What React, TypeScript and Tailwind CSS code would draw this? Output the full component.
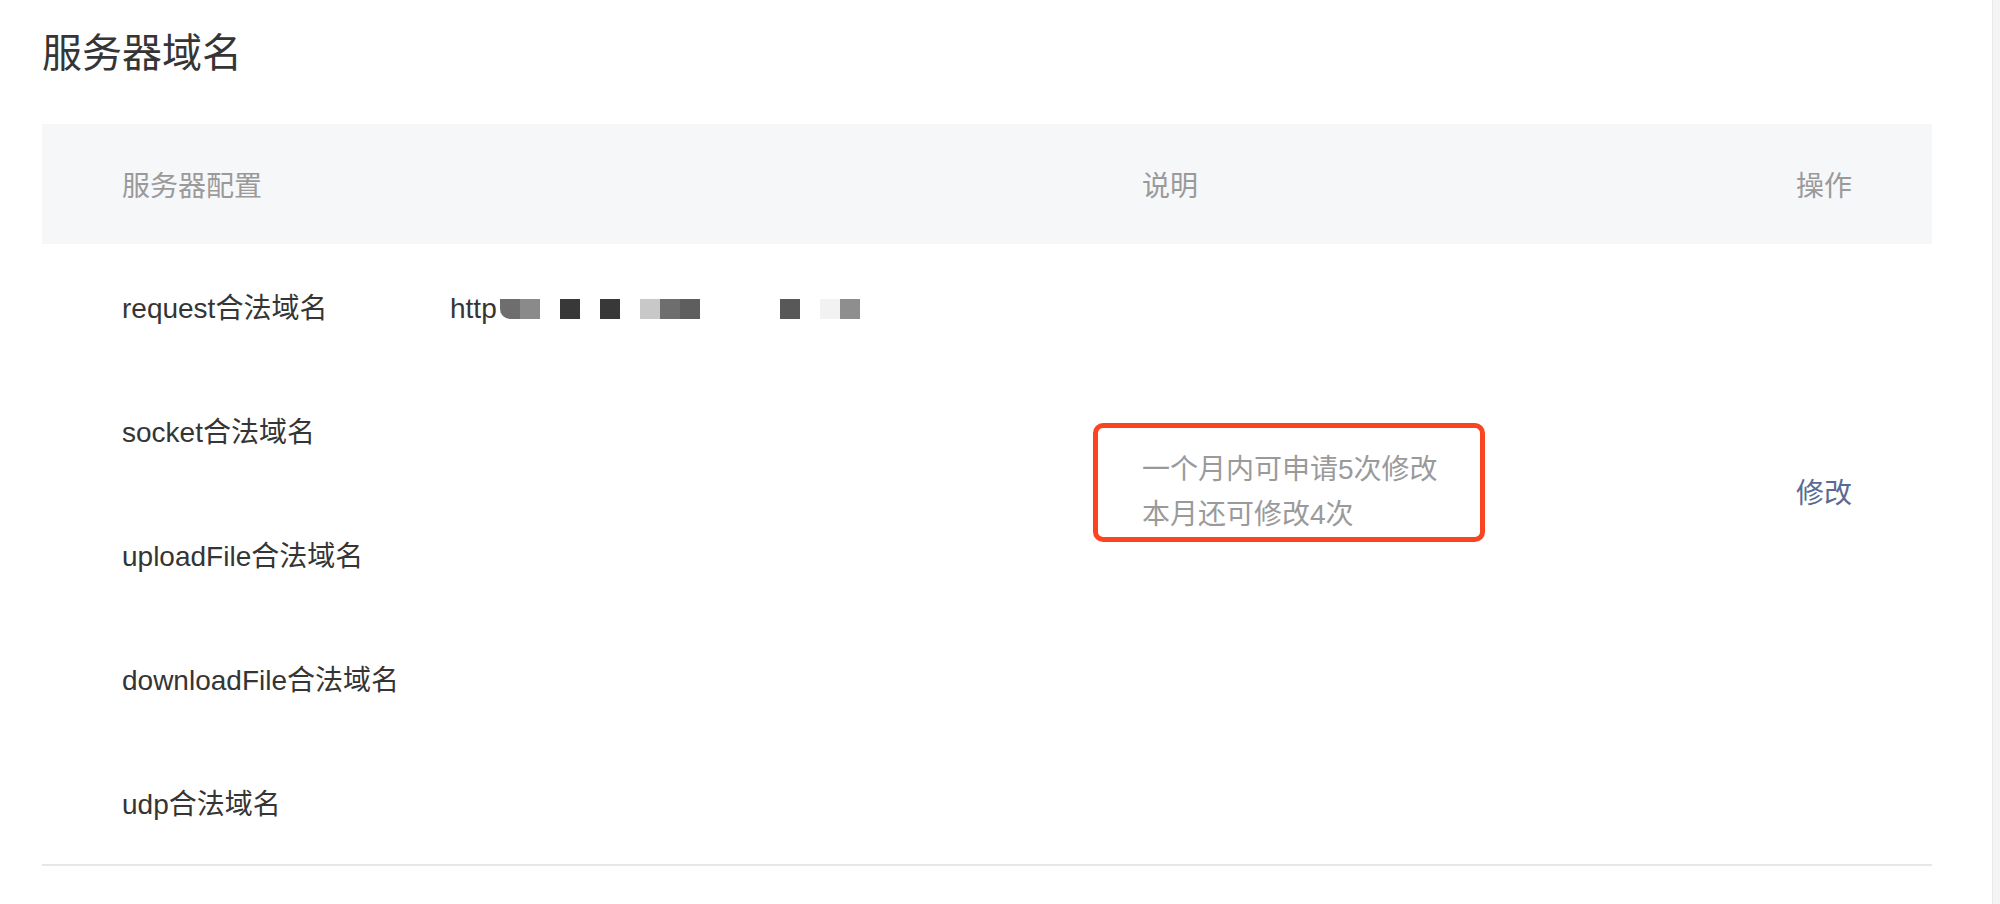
const domains = ["request合法域名", "socket合法域名", "uploadFile合法域名", "downloadFile合法域名", "udp合法域名"];

// pixelated blur over the configured url
const mosaic = [
  "#6e6e6e", "#8a8a8a", "", "#383838", "", "#383838", "", "#c8c8c8", "#6e6e6e",
  "#5e5e5e", "", "", "", "", "#585858", "", "#f2f2f2", "#8e8e8e",
];

function Mosaic() {
  return (
    <div className="ml-[3px] flex h-[20px] items-center">
      {mosaic.map((c, i) => (
        <span
          key={i}
          className={i === 0 ? "h-[20px] w-[20px] rounded-bl-[10px]" : "h-[20px] w-[20px]"}
          style={{ background: c || "transparent" }}
        />
      ))}
    </div>
  );
}

export default function App() {
  return (
    <div
      className="flex h-[904px] w-full overflow-hidden bg-white text-[#353535]"
      style={{ fontFamily: '"Liberation Sans", "Noto Sans CJK SC", sans-serif' }}
    >
      <div className="flex-1 pl-[42px] pr-[60px] pt-[33px]">
        <h2 className="text-[40px] leading-[40px] font-normal">服务器域名</h2>

        <div className="mt-[51px] w-[1890px]">
          <div className="grid h-[120px] grid-cols-[1020px_654px_1fr] items-center bg-[#f6f7f9] px-[80px] pt-[5px] text-[28px] text-[#9a9a9a]">
            <div>服务器配置</div>
            <div>说明</div>
            <div>操作</div>
          </div>

          <div className="grid grid-cols-[328px_692px_654px_1fr] grid-rows-[repeat(5,124px)] border-b-2 border-[#e7e7eb] px-[80px] text-[28px]">
            {domains.map((d, i) => (
              <div
                key={d}
                className="col-start-1 flex items-center whitespace-nowrap pt-[5px]"
                style={{ gridRowStart: i + 1 }}
              >
                {d}
              </div>
            ))}
            <div className="col-start-2 row-start-1 flex items-center pt-[5px]">
              <span>http</span>
              <Mosaic />
            </div>
            <div className="col-start-3 row-span-4 row-start-1 flex items-center">
              <div className="relative leading-[45px] text-[#9a9a9a]">
                <div>一个月内可申请5次修改</div>
                <div>本月还可修改4次</div>
                <div className="absolute -top-[24px] -bottom-[5px] -left-[49px] -right-[47px] rounded-[10px] border-[5px] border-[#fb4521]" />
              </div>
            </div>
            <div className="col-start-4 row-span-4 row-start-1 flex items-center whitespace-nowrap pt-[4px] text-[#576b95]">
              修改
            </div>
          </div>
        </div>
      </div>
      <div className="h-full w-[8px] border-l border-[#e9e9e9] bg-[#f4f4f4]" />
    </div>
  );
}
